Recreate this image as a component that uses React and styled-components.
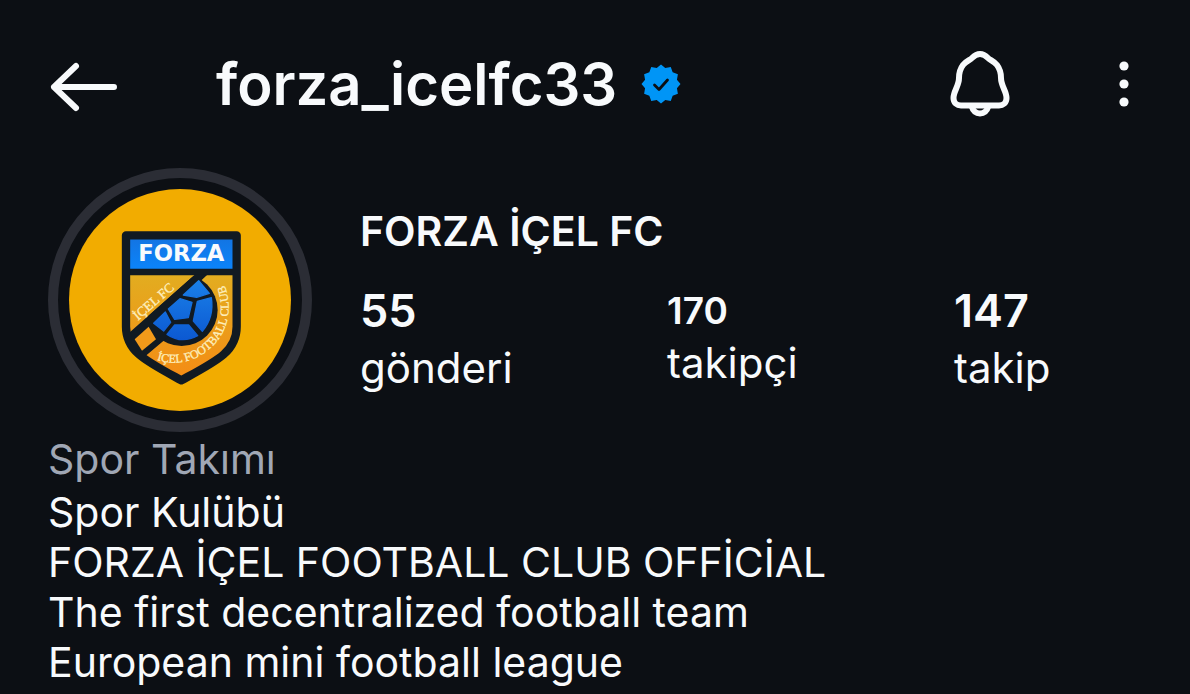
import React from "react";
import styled, { createGlobalStyle } from "styled-components";

const stats = [
  { value: "55", label: "gönderi", size: "large" },
  { value: "170", label: "takipçi", size: "small" },
  { value: "147", label: "takip", size: "large" },
];

const bio = [
  "Spor Kulübü",
  "FORZA İÇEL FOOTBALL CLUB OFFİCİAL",
  "The first decentralized football team",
  "European mini football league",
];

const BackIcon = () => (
  <svg width="70" height="60" viewBox="0 0 70 60" aria-hidden="true">
    <path
      d="M28 12 L6 33 L28 54 M6 33 H66"
      fill="none"
      stroke="currentColor"
      strokeWidth="6"
      strokeLinecap="round"
      strokeLinejoin="round"
    />
  </svg>
);

const BellIcon = () => (
  <svg width="60" height="68" viewBox="0 0 60 68" aria-hidden="true">
    <g fill="none" stroke="currentColor" strokeWidth="6">
      <path
        d="M30 4 C26 4 24 6 22 8 C20 10 16 11 13 15 C10 19 9 23 9 28 C9 36 3.500 41 3.500 48 C3.500 53 7 55.500 11 55.500 H49 C53 55.500 56.500 53 56.500 48 C56.500 41 51 36 51 28 C51 23 50 19 47 15 C44 11 40 10 38 8 C36 6 34 4 30 4 Z"
        strokeLinejoin="round"
      />
      <path d="M21.500 56 C23 61 26 63.500 30 63.500 C34 63.500 37 61 38.500 56" />
    </g>
  </svg>
);

const MoreIcon = () => (
  <svg width="12" height="46" viewBox="0 0 12 46" aria-hidden="true">
    <g fill="currentColor">
      <circle cx="6" cy="5" r="4.600" />
      <circle cx="6" cy="23" r="4.600" />
      <circle cx="6" cy="41" r="4.600" />
    </g>
  </svg>
);

const badgePoints = Array.from({ length: 24 }, (_, i) => {
  const radius = i % 2 === 0 ? 19.5 : 16.5;
  const angle = (i * Math.PI) / 12 - Math.PI / 2;
  return `${20 + radius * Math.cos(angle)},${20 + radius * Math.sin(angle)}`;
}).join(" ");

const VerifiedIcon = () => (
  <svg width="40" height="40" viewBox="0 0 40 40" role="img" aria-label="Verified">
    <polygon points={badgePoints} fill="#0095f6" />
    <path
      d="M13.500 21 L18 25.500 L26.500 16"
      fill="none"
      stroke="#0c0f14"
      strokeWidth="2.800"
      strokeLinecap="round"
      strokeLinejoin="round"
    />
  </svg>
);

const Crest = () => (
  <svg width="222" height="222" viewBox="87 87 666 666" role="img" aria-label="Forza İçel FC">
    <defs>
      <linearGradient id="banner" x1="0" y1="0" x2="0" y2="1">
        <stop offset="0" stopColor="#1473e0" />
        <stop offset="1" stopColor="#0b84fb" />
      </linearGradient>
      <linearGradient id="field" x1="0" y1="0" x2="0" y2="1">
        <stop offset="0" stopColor="#e2ad20" />
        <stop offset="1" stopColor="#f58a14" />
      </linearGradient>
      <linearGradient id="ball" x1="0" y1="0" x2="0" y2="1">
        <stop offset="0" stopColor="#1a80e8" />
        <stop offset="1" stopColor="#0c59d2" />
      </linearGradient>
      <clipPath id="shield">
        <path d="M258 226 H590 V500 C590 575 530 603 424 661 C318 603 258 575 258 500 Z" />
      </clipPath>
      <clipPath id="belowStripe">
        <path d="M470 340 L560 320 V600 H370 L300 490 Z" />
      </clipPath>
      <path id="diagonal" d="M294 482 L434 361" />
      <path id="arc" d="M350 600 C420 622 482 598 526 550 C572 498 580 420 540 346" />
    </defs>
    <circle cx="420" cy="420" r="333" fill="#f2ac00" />
    <g clipPath="url(#shield)">
      <rect x="245" y="340" width="360" height="334" fill="url(#field)" />
      <rect x="258" y="226" width="332" height="103" fill="url(#banner)" />
      <path d="M258 336 H590" stroke="#111a22" strokeWidth="20" />
      <circle cx="425" cy="450" r="108" fill="#111a22" clipPath="url(#belowStripe)" />
      <path d="M464 344 L266 520 L305 598 L385 530 L350 485 L502 344 Z" fill="#111a22" />
      <path d="M326 500 L284 538 L306 572 L348 538 Z" fill="#f29a1a" />
      <path
        d="M476 362 L508 400 L470 412 L430 405 Z M420 416 L456 427 L445 473 L404 478 L385 447 Z M376 456 L392 487 L371 513 L341 490 Z M404 495 L446 495 L473 527 Q425 553 381 523 Z M472 424 L514 413 Q523 472 487 514 L460 483 Z"
        fill="url(#ball)"
        stroke="url(#ball)"
        strokeWidth="4"
        strokeLinejoin="round"
      />
    </g>
    <path
      d="M258 226 H590 V500 C590 575 530 603 424 661 C318 603 258 575 258 500 Z"
      fill="none"
      stroke="#111a22"
      strokeWidth="25"
      strokeLinejoin="round"
    />
    <CrestName x="424" y="304" textAnchor="middle">
      FORZA
    </CrestName>
    <CrestMotto $size={40}>
      <textPath href="#diagonal">İÇEL FC</textPath>
    </CrestMotto>
    <CrestMotto $size={36}>
      <textPath href="#arc">İÇEL FOOTBALL CLUB</textPath>
    </CrestMotto>
  </svg>
);

export default function App() {
  return (
    <Page>
      <GlobalStyle />
      <TopBar>
        <IconButton aria-label="Geri">
          <BackIcon />
        </IconButton>
        <Username>forza_icelfc33</Username>
        <VerifiedIcon />
        <Actions>
          <IconButton aria-label="Bildirimler">
            <BellIcon />
          </IconButton>
          <IconButton aria-label="Seçenekler">
            <MoreIcon />
          </IconButton>
        </Actions>
      </TopBar>
      <Profile>
        <Avatar>
          <Crest />
        </Avatar>
        <Summary>
          <Name>FORZA İÇEL FC</Name>
          <Stats>
            {stats.map((stat) => (
              <Stat key={stat.label}>
                <StatLabel $size={stat.size}>{stat.label}</StatLabel>
                <StatValue $size={stat.size}>{stat.value}</StatValue>
              </Stat>
            ))}
          </Stats>
        </Summary>
      </Profile>
      <Bio>
        <Category>Spor Takımı</Category>
        {bio.map((line) => (
          <BioLine key={line}>{line}</BioLine>
        ))}
      </Bio>
    </Page>
  );
}

const GlobalStyle = createGlobalStyle`
  * {
    box-sizing: border-box;
  }
  body {
    margin: 0;
    background: #0c0f14;
    color: #f8fafc;
    font-family: Inter, "Liberation Sans", sans-serif;
  }
`;

const Page = styled.main`
  padding: 0 48px;
`;

const TopBar = styled.header`
  display: flex;
  align-items: center;
  height: 168px;
`;

const IconButton = styled.button`
  display: flex;
  padding: 0;
  border: none;
  background: none;
  color: inherit;
`;

const Username = styled.h1`
  margin: 0 24px 0 98px;
  font-size: 58px;
  font-weight: 600;
  line-height: 72px;
`;

const Actions = styled.div`
  display: flex;
  align-items: center;
  gap: 108px;
  margin-left: auto;
  padding-right: 12px;
`;

const Profile = styled.section`
  display: flex;
  gap: 48px;
`;

const Avatar = styled.div`
  display: flex;
  flex: none;
  padding: 11px;
  border: 10px solid #2b2d35;
  border-radius: 50%;
`;

const Summary = styled.div`
  flex: 1;
  padding-top: 36px;
`;

const Name = styled.h2`
  margin: 0;
  font-size: 41px;
  font-weight: 600;
  line-height: 54px;
`;

const Stats = styled.dl`
  display: grid;
  grid-template-columns: 307px 287px 1fr;
  margin: 25px 0 0;
`;

const Stat = styled.div`
  display: flex;
  flex-direction: column-reverse;
  justify-content: flex-end;
`;

const StatValue = styled.dd`
  margin: 0;
  font-size: ${({ $size }) => ($size === "small" ? "37px" : "45px")};
  font-weight: 600;
  line-height: 56px;
`;

const StatLabel = styled.dt`
  font-size: 42px;
  line-height: ${({ $size }) => ($size === "small" ? "48px" : "58px")};
`;

const Bio = styled.section`
  padding-top: 2px;
`;

const BioLine = styled.p`
  margin: 0;
  font-size: 41px;
  line-height: 50px;
  white-space: nowrap;
`;

const Category = styled(BioLine)`
  margin-bottom: 3px;
  color: #a0a7b5;
`;

const CrestName = styled.text`
  fill: #f8fafc;
  font: bold 68px "DejaVu Sans", sans-serif;
`;

const CrestMotto = styled.text`
  fill: #fdeebc;
  stroke: #fdeebc;
  font-family: "Liberation Serif", serif;
  font-size: ${({ $size }) => $size}px;
`;
